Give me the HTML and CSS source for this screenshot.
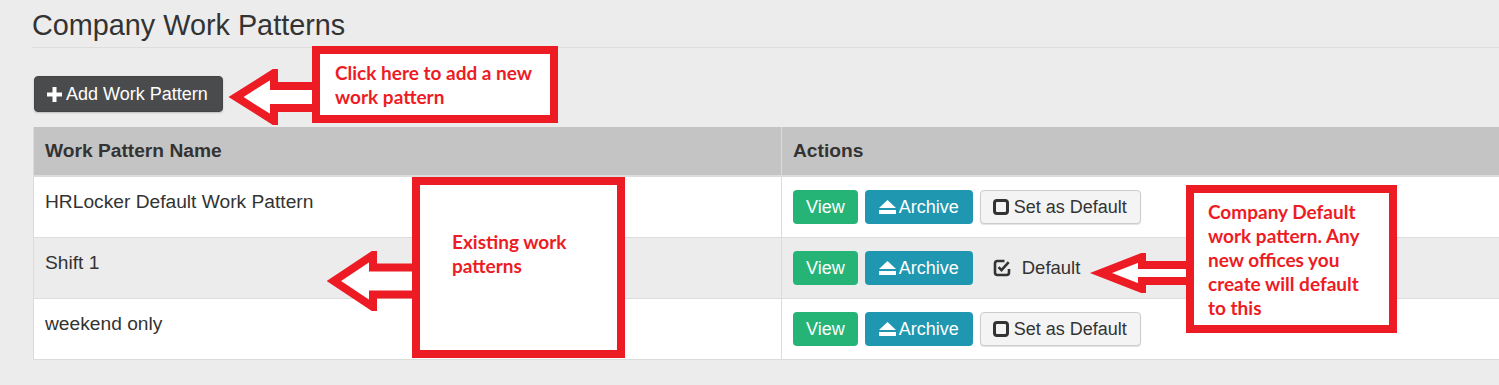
FILE: index.html
```html
<!DOCTYPE html>
<html lang="en">
<head>
    <meta charset="UTF-8">
    <title>Company Work Patterns</title>
    <link rel="stylesheet" href="styles.css">
</head>
<body>
    <div class="page">
        <h1 class="page-title">Company Work Patterns</h1>

        <div class="toolbar">
            <button class="btn btn-dark">
                <svg class="icon-plus" viewBox="0 0 15 15"><path d="M5.5 0h4v5.5H15v4H9.5V15h-4V9.5H0v-4h5.5z"/></svg>
                Add Work Pattern
            </button>
        </div>

        <table class="patterns">
            <thead>
                <tr>
                    <th class="col-name">Work Pattern Name</th>
                    <th class="col-actions">Actions</th>
                </tr>
            </thead>
            <tbody>
                <tr>
                    <td>HRLocker Default Work Pattern</td>
                    <td class="col-actions">
                        <div class="actions">
                            <button class="btn btn-view">View</button>
                            <button class="btn btn-archive"><svg class="icon-eject" viewBox="0 0 17 14"><path d="M8.5 0L17 8H0z"/><rect y="10" width="17" height="4"/></svg>Archive</button>
                            <button class="btn btn-default"><svg class="icon-box" viewBox="0 0 16 16"><rect x="1.5" y="1.5" width="13" height="13" rx="2.5"/></svg>Set as Default</button>
                        </div>
                    </td>
                </tr>
                <tr>
                    <td>Shift 1</td>
                    <td class="col-actions">
                        <div class="actions">
                            <button class="btn btn-view">View</button>
                            <button class="btn btn-archive"><svg class="icon-eject" viewBox="0 0 17 14"><path d="M8.5 0L17 8H0z"/><rect y="10" width="17" height="4"/></svg>Archive</button>
                            <span class="is-default"><svg class="icon-check" viewBox="0 0 18 18"><path d="M11.5 2H4.5A2.5 2.5 0 0 0 2 4.5v9A2.5 2.5 0 0 0 4.5 16h9a2.5 2.5 0 0 0 2.5-2.5V10"/><path d="M5.5 8.2l3 3 7.2-8"/></svg>Default</span>
                        </div>
                    </td>
                </tr>
                <tr>
                    <td>weekend only</td>
                    <td class="col-actions">
                        <div class="actions">
                            <button class="btn btn-view">View</button>
                            <button class="btn btn-archive"><svg class="icon-eject" viewBox="0 0 17 14"><path d="M8.5 0L17 8H0z"/><rect y="10" width="17" height="4"/></svg>Archive</button>
                            <button class="btn btn-default"><svg class="icon-box" viewBox="0 0 16 16"><rect x="1.5" y="1.5" width="13" height="13" rx="2.5"/></svg>Set as Default</button>
                        </div>
                    </td>
                </tr>
            </tbody>
        </table>

        <!-- help callouts laid over the screen -->
        <div class="callout callout-add">
            <svg class="callout-arrow" width="85" height="56"><polyline points="85,17 47,17 47,4 9,28 47,52 47,39 85,39"/></svg>
            <p>Click here to add a new<br>work pattern</p>
        </div>

        <div class="callout callout-existing">
            <svg class="callout-arrow" width="85" height="60"><polyline points="85,16.5 46,16.5 46,4 7,30 46,56 46,43.5 85,43.5"/></svg>
            <p>Existing work<br>patterns</p>
        </div>

        <div class="callout callout-default">
            <svg class="callout-arrow" width="96" height="40"><polyline points="96,12 52,12 52,4 11,20 52,36 52,28 96,28"/></svg>
            <p>Company Default<br>work pattern. Any<br>new offices you<br>create will default<br>to this</p>
        </div>
    </div>
</body>
</html>
```

FILE: styles.css
```css
* {
    box-sizing: border-box;
}

body {
    margin: 0;
    background-color: #ececec;
    font-family: "Liberation Sans", Arial, sans-serif;
    color: #333;
    overflow: hidden;
}

.page {
    position: relative;
    padding: 10px 0 0 32px;
}

.page-title {
    margin: 0;
    font-size: 28.8px;
    font-weight: normal;
    line-height: 31px;
    padding-bottom: 6px;
    border-bottom: 1px solid #dedede;
}

.toolbar {
    display: flex;
    margin: 28px 0 15px 2px;
}

/* buttons */
.btn {
    display: inline-flex;
    align-items: center;
    gap: 3px;
    height: 34px;
    padding: 0 12px;
    border: 1px solid transparent;
    border-radius: 4px;
    font: 18px "Liberation Sans", Arial, sans-serif;
    color: #fff;
    cursor: pointer;
}

.btn svg {
    fill: currentColor;
}

.btn-dark {
    height: 36px;
    padding: 0 14px 0 12px;
    gap: 4px;
    font-size: 18px;
    background-color: #4a4b4d;
    border-color: #444;
    box-shadow: 0 1px 2px rgba(0,0,0,0.2);
}

.icon-plus {
    width: 15px;
    height: 15px;
}

.btn-view {
    background-color: #25b476;
}

.btn-archive {
    padding: 0 13px;
    background-color: #2097b1;
}

.icon-eject {
    width: 17px;
    height: 14px;
}

.btn-default {
    padding: 0 13px 0 12px;
    gap: 5px;
    background-color: #f4f4f4;
    border-color: #ccc;
    color: #333;
    box-shadow: 0 1px 1px rgba(0,0,0,0.12);
}

.icon-box {
    width: 16px;
    height: 16px;
}

.icon-box rect {
    fill: none;
    stroke: #333;
    stroke-width: 3;
}

.is-default {
    display: inline-flex;
    align-items: center;
    gap: 11px;
    height: 34px;
    padding: 0 13px;
    font-size: 18.5px;
}

.icon-check {
    width: 18px;
    height: 18px;
    fill: none;
    stroke: #333;
    stroke-width: 2.6;
}

/* table */
.patterns {
    width: 1500px;
    margin-left: 1px;
    border-collapse: collapse;
    font-size: 19.2px;
    border-left: 1px solid #dcdcdc;
}

.patterns th {
    background-color: #c4c4c4;
    text-align: left;
    font-weight: bold;
    padding: 12px 11px;
    line-height: 24px;
    border-bottom: 2px solid #dcdcdc;
}

.patterns .col-name {
    width: 748px;
}

.patterns .col-actions {
    border-left: 1px solid #dcdcdc;
}

.patterns td {
    padding: 13px 11px 13px;
    line-height: 24px;
    vertical-align: top;
    border-top: 1px solid #dcdcdc;
}

.patterns tbody tr {
    background-color: #fff;
}

.patterns tbody tr:nth-child(even) {
    background-color: #ececec;
}

.patterns tbody tr:last-child td {
    border-bottom: 1px solid #dcdcdc;
}

.actions {
    display: flex;
    align-items: center;
    gap: 7px;
}

/* callouts */
.callout {
    position: absolute;
    border: 8px solid #ed1c24;
    background: #fff;
    color: #ed1c24;
    font: 700 19px/24px Lato, "Open Sans", sans-serif;
    white-space: nowrap;
}

.callout p {
    margin: 0;
}

.callout-arrow {
    position: absolute;
    right: calc(100% + 8px);
}

.callout-arrow polyline {
    fill: #fff;
    stroke: #ed1c24;
    stroke-width: 8;
    stroke-linejoin: miter;
}

.callout-add {
    left: 312px;
    top: 46px;
    width: 246px;
    height: 77px;
    padding: 7px 0 0 15px;
}

.callout-add .callout-arrow {
    top: 15px;
}

.callout-existing {
    left: 412px;
    top: 177px;
    width: 213px;
    height: 181px;
    padding: 45px 0 0 32px;
}

.callout-existing .callout-arrow {
    top: 66px;
}

.callout-default {
    left: 1186px;
    top: 185px;
    width: 211px;
    height: 148px;
    padding: 7px 0 0 14px;
}

.callout-default .callout-arrow {
    top: 60px;
}
```
